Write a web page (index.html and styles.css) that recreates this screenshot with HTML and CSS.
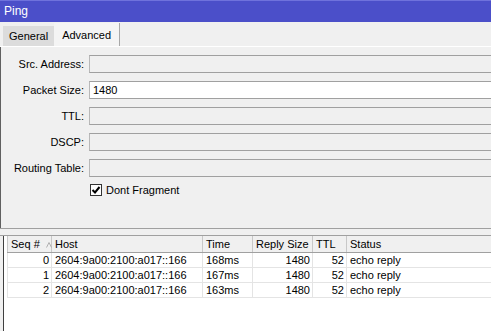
FILE: index.html
```html
<!DOCTYPE html>
<html lang="en">
<head>
    <meta charset="UTF-8">
    <title>Ping</title>
    <link rel="stylesheet" href="styles.css">
</head>
<body>

<div class="titlebar">Ping</div>

<div class="tabs">
    <div class="tab">General</div>
    <div class="tab active">Advanced</div>
</div>

<div class="form">
    <label>Src. Address:</label>
    <div class="field"></div>

    <label>Packet Size:</label>
    <div class="field editable">1480</div>

    <label>TTL:</label>
    <div class="field"></div>

    <label>DSCP:</label>
    <div class="field"></div>

    <label>Routing Table:</label>
    <div class="field"></div>

    <span></span>
    <div class="check">
        <span class="box">
            <svg width="10" height="10" viewBox="0 0 10 10">
                <polyline points="1.5,5 4,7.5 8.5,2" fill="none" stroke="#000" stroke-width="2"/>
            </svg>
        </span>
        Dont Fragment
    </div>
</div>

<div class="divider"></div>

<div class="results">
    <table>
        <colgroup>
            <col class="c-seq">
            <col class="c-host">
            <col class="c-time">
            <col class="c-size">
            <col class="c-ttl">
            <col>
        </colgroup>
        <thead>
            <tr>
                <th>Seq # <svg class="sort" width="6" height="6" viewBox="0 0 6 6"><polyline points="0.5,5.5 3,0.5 5.5,5.5" fill="none" stroke="#b0b0b0" stroke-width="1"/></svg></th>
                <th>Host</th>
                <th>Time</th>
                <th>Reply Size</th>
                <th>TTL</th>
                <th>Status</th>
            </tr>
        </thead>
        <tbody>
            <tr>
                <td class="num">0</td>
                <td>2604:9a00:2100:a017::166</td>
                <td>168ms</td>
                <td class="num">1480</td>
                <td class="num">52</td>
                <td>echo reply</td>
            </tr>
            <tr>
                <td class="num">1</td>
                <td>2604:9a00:2100:a017::166</td>
                <td>167ms</td>
                <td class="num">1480</td>
                <td class="num">52</td>
                <td>echo reply</td>
            </tr>
            <tr>
                <td class="num">2</td>
                <td>2604:9a00:2100:a017::166</td>
                <td>163ms</td>
                <td class="num">1480</td>
                <td class="num">52</td>
                <td>echo reply</td>
            </tr>
        </tbody>
    </table>
</div>

</body>
</html>
```

FILE: styles.css
```css
html, body {
    margin: 0;
    height: 100%;
    overflow: hidden;
}
body {
    background: #f0f0f0;
    font-family: "Liberation Sans", Arial, sans-serif;
    font-size: 11px;
    color: #000;
    display: flex;
    flex-direction: column;
}
.titlebar {
    height: 21px;
    line-height: 21px;
    border-top: 1px solid #6f72dc;
    background-color: #4b4fc9;
    color: #fff;
    font-size: 12px;
    padding-left: 4px;
}
.tabs {
    height: 24px;
    display: flex;
    align-items: flex-end;
    padding-left: 3px;
    border-bottom: 1px solid #fff;
}
.tab {
    height: 20px;
    line-height: 21px;
    padding: 0 6px;
    background-color: #dcdcdc;
}
.tab.active {
    height: 23px;
    line-height: 24px;
    background-color: #f4f4f4;
    border-right: 1px solid #a8a8a8;
    padding: 0 8px;
}
.form {
    display: grid;
    grid-template-columns: 83px 1fr;
    column-gap: 5px;
    row-gap: 8px;
    padding-top: 8px;
    height: 173px;
    align-content: start;
    border-left: 1px solid #606060;
}
.form label {
    text-align: right;
    line-height: 18px;
    margin-left: -1px;
}
.field {
    height: 16px;
    line-height: 16px;
    border-top: 1px solid #a0a0a0;
    border-bottom: 1px solid #a0a0a0;
    border-left: 1px solid #b8b8b8;
    background-color: #f0f0f0;
    padding-left: 3px;
}
.field.editable {
    background-color: #fff;
}
.check {
    display: flex;
    align-items: center;
    gap: 4px;
    height: 14px;
    margin-top: -2px;
}
.box {
    width: 10px;
    height: 10px;
    border: 1px solid #333;
    background: #fff;
    display: flex;
    margin-left: 1px;
}
.divider {
    height: 6px;
    border-top: 1px solid #a0a0a0;
    border-bottom: 1px solid #a0a0a0;
}
.results {
    flex: 1;
    margin-left: 3px;
    border-left: 1px solid #404040;
    background: #fff;
    padding-left: 3px;
}
table {
    border-collapse: collapse;
    table-layout: fixed;
    width: 100%;
}
.c-seq { width: 44px; }
.c-host { width: 151px; }
.c-time { width: 50px; }
.c-size { width: 60px; }
.c-ttl { width: 34px; }
th {
    height: 16px;
    padding: 0 0 0 3px;
    font-weight: normal;
    text-align: left;
    background: #f0f0f0;
    border-left: 1px solid #c8c8c8;
    border-bottom: 1px solid #a0a0a0;
    white-space: nowrap;
}
.sort {
    margin-left: 3px;
}
td {
    height: 14px;
    padding: 0 0 0 3px;
    line-height: 14px;
    border-left: 1px solid #e4e4e4;
    border-bottom: 1px solid #e4e4e4;
    white-space: nowrap;
    overflow: hidden;
}
td.num {
    text-align: right;
    padding: 0 2px 0 0;
}
```
